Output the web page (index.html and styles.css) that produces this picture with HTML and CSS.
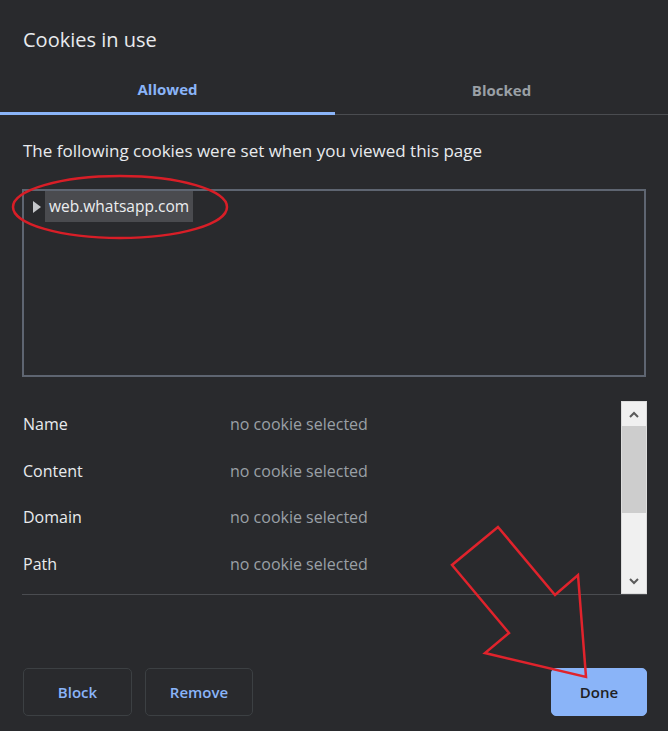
FILE: index.html
```html
<!DOCTYPE html>
<html lang="en">
<head>
    <meta charset="UTF-8">
    <meta name="viewport" content="width=device-width, initial-scale=1.0">
    <title>Cookies in use</title>
    <link rel="stylesheet" href="styles.css">
</head>
<body>
    <div class="dialog">
        <h1 class="title">Cookies in use</h1>

        <div class="tabs">
            <div class="tab active">Allowed</div>
            <div class="tab">Blocked</div>
        </div>

        <p class="intro">The following cookies were set when you viewed this page</p>

        <div class="tree">
            <div class="tree-item">
                <svg class="caret" width="8" height="12" viewBox="0 0 8 12"><path d="M0 0 L8 6 L0 12 Z" fill="#c4c6c9"/></svg>
                <span class="site">web.whatsapp.com</span>
            </div>
        </div>

        <div class="details">
            <div class="rows">
                <div class="row"><span class="label">Name</span><span class="value">no cookie selected</span></div>
                <div class="row"><span class="label">Content</span><span class="value">no cookie selected</span></div>
                <div class="row"><span class="label">Domain</span><span class="value">no cookie selected</span></div>
                <div class="row"><span class="label">Path</span><span class="value">no cookie selected</span></div>
            </div>
            <div class="scrollbar">
                <div class="arrow">
                    <svg width="10" height="7" viewBox="0 0 10 7"><path d="M1 6 L5 2 L9 6" fill="none" stroke="#5a5a5a" stroke-width="2"/></svg>
                </div>
                <div class="thumb"></div>
                <div class="track"></div>
                <div class="arrow">
                    <svg width="10" height="7" viewBox="0 0 10 7"><path d="M1 1 L5 5 L9 1" fill="none" stroke="#5a5a5a" stroke-width="2"/></svg>
                </div>
            </div>
        </div>

        <div class="actions">
            <button class="btn btn-block">Block</button>
            <button class="btn btn-remove">Remove</button>
            <button class="btn btn-done">Done</button>
        </div>

        <!-- red annotation marks drawn over the screenshot -->
        <svg class="marks" width="668" height="731" viewBox="0 0 668 731">
            <ellipse cx="120" cy="207" rx="107" ry="31" fill="none" stroke="#d81e27" stroke-width="2.5"/>
            <polygon points="498,527 555,595 578,575 586,677 485,653 509,633 452,565" fill="none" stroke="#e0232c" stroke-width="2.5" stroke-linejoin="miter"/>
        </svg>
    </div>
</body>
</html>
```

FILE: styles.css
```css
body {
    margin: 0;
    padding: 0;
    background-color: #292a2d;
    font-family: "Open Sans", "Noto Sans", sans-serif;
    color: #e8eaed;
}

.dialog {
    position: relative;
    width: 668px;
    height: 731px;
    display: flex;
    flex-direction: column;
}

.title {
    margin: 0;
    padding: 25px 23px 0;
    font-size: 20px;
    font-weight: 400;
    line-height: 30px;
}

.tabs {
    display: grid;
    grid-template-columns: 335px 1fr;
    margin-top: 17px;
    border-bottom: 1px solid #4a4c50;
}

.tab {
    text-align: center;
    font-size: 15px;
    font-weight: 700;
    color: #9aa0a6;
    height: 42px;
    line-height: 37px;
}

.tab.active {
    color: #8ab4f8;
    border-bottom: 3px solid #8ab4f8;
    margin-bottom: -1px;
    height: 40px;
    line-height: 35px;
}

.intro {
    margin: 25px 23px 0;
    font-size: 17px;
    line-height: 22px;
}

.tree {
    margin: 27px 0 0 22px;
    width: 620px;
    height: 184px;
    border: 2px solid #5e6571;
}

.tree-item {
    display: flex;
    align-items: center;
    height: 31px;
}

.caret {
    margin: 0 4px 0 9px;
}

.site {
    background-color: #4a4b4f;
    padding: 0 4px;
    height: 31px;
    line-height: 31px;
    font-size: 15.5px;
    color: #eceef0;
}

.details {
    display: flex;
    margin: 24px 0 0 22px;
    width: 625px;
    height: 193px;
    border-bottom: 1px solid #4a4c50;
}

.rows {
    flex: 1;
}

.row {
    display: flex;
    height: 46.5px;
    align-items: center;
    font-size: 16px;
}

.label {
    width: 207px;
    padding-left: 1px;
}

.value {
    color: #9aa0a6;
}

.scrollbar {
    width: 26px;
    display: flex;
    flex-direction: column;
    background-color: #f0f0f0;
    border: 1px solid #dcdcdc;
    box-sizing: border-box;
}

.arrow {
    height: 24px;
    display: flex;
    align-items: center;
    justify-content: center;
}

.thumb {
    height: 87px;
    background-color: #cdcdcd;
}

.track {
    flex: 1;
}

.actions {
    display: flex;
    gap: 13px;
    margin-top: 73px;
    padding: 0 21px 0 23px;
}

.btn {
    height: 48px;
    border: 1px solid #3c4043;
    border-radius: 5px;
    background-color: #292a2d;
    color: #8ab4f8;
    font-family: "Open Sans", "Noto Sans", sans-serif;
    font-size: 15px;
    font-weight: 600;
    cursor: pointer;
}

.btn-block {
    width: 109px;
}

.btn-remove {
    width: 108px;
}

.btn-done {
    width: 96px;
    margin-left: auto;
    background-color: #8ab4f8;
    border-color: #8ab4f8;
    color: #202124;
}

.marks {
    position: absolute;
    left: 0;
    top: 0;
    pointer-events: none;
}
```
